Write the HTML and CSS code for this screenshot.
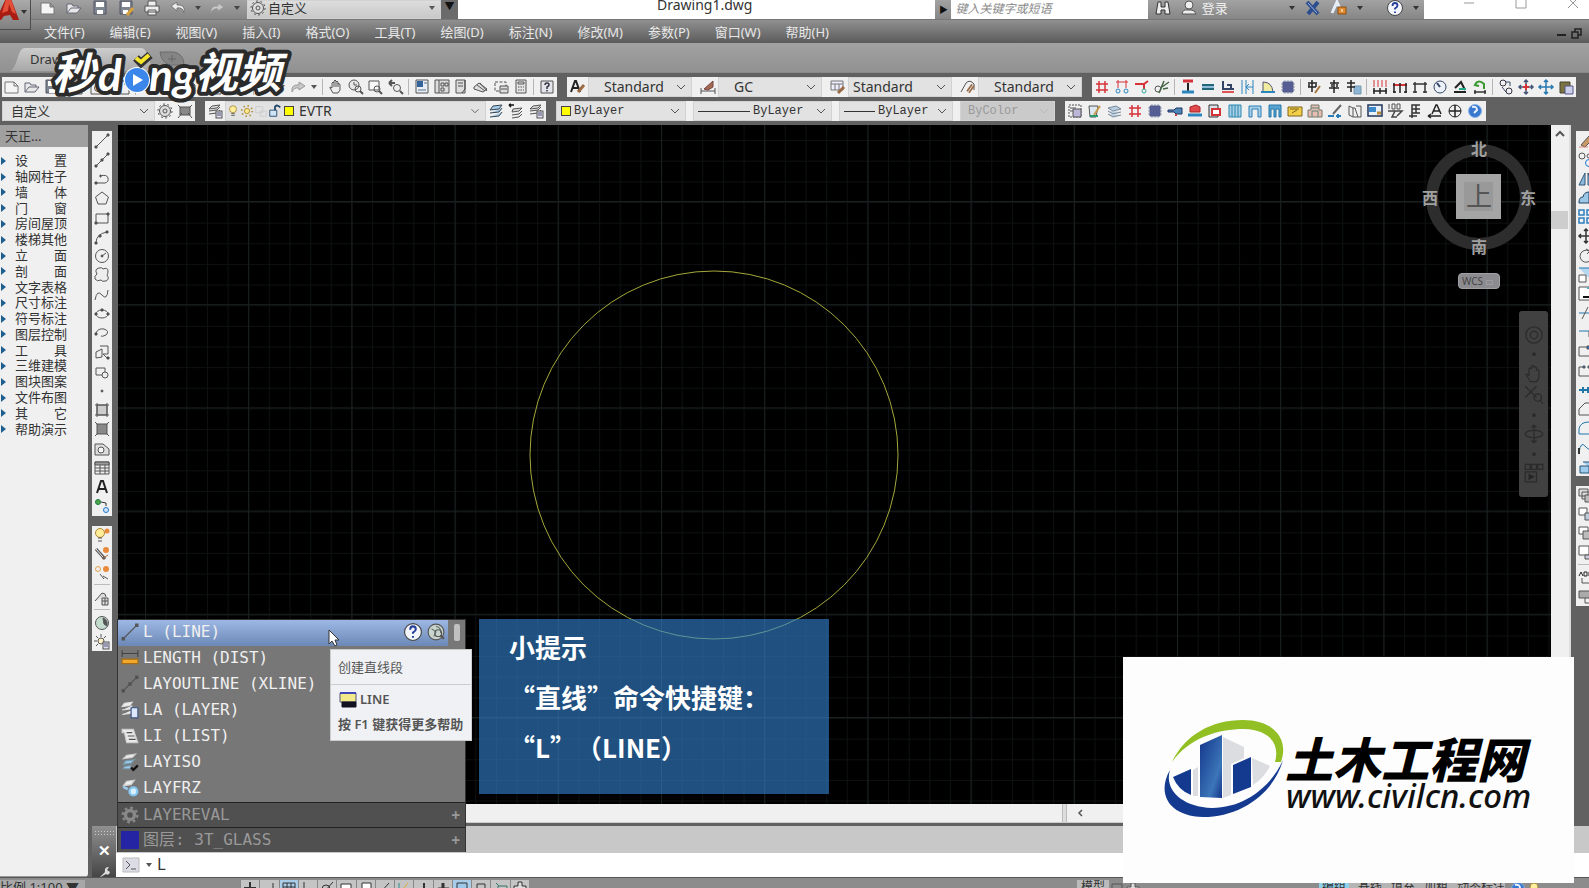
FILE: index.html
```html
<!doctype html>
<html lang="zh-CN">
<head>
    <meta charset="UTF-8">
    <meta content="width=device-width, initial-scale=1" name="viewport">
    <title>Drawing1.dwg</title>
    <link rel="stylesheet" href="styles.css">
</head>
<body>
<header class="titlebar">
    <button class="app-logo" aria-label="A">
        <svg viewBox="0 0 30 29"><path d="M-4 20 7-4h3l9 24h-6l-3-5-6 1-3 4z" fill="#a81c12"/><path d="M7-4 2 13l6-2 1-7 3 8 4 2L10-4z" fill="#e2503c"/><path d="M21 10h6l-3 4z" fill="#333"/></svg>
    </button>
    <div class="quick" data-icons="new open save saveas print undo caret redo caret"></div>
    <label class="field workspace-field"><i data-icon="gear"></i><select aria-label="工作空间"><option>自定义</option></select><i data-icon="caret"></i></label>
    <button class="quick-more">▼</button>
    <div class="doc-title">Drawing1.dwg</div>
    <button class="search-toggle">▶</button>
    <input class="search" type="text" placeholder="键入关键字或短语" aria-label="搜索">
    <div class="account">
        <i data-icon="binoculars"></i><i data-icon="user"></i>
        <button class="login">登录</button>
        <i data-icon="caret"></i><i data-icon="exchange"></i><i data-icon="lock"></i><i data-icon="caret"></i>
        <i class="help" data-icon="help"></i><i data-icon="caret"></i>
    </div>
    <div class="window-buttons" data-icons="min max close"></div>
</header>

<nav class="menubar">
    <a href="#">文件(F)</a>
    <a href="#">编辑(E)</a>
    <a href="#">视图(V)</a>
    <a href="#">插入(I)</a>
    <a href="#">格式(O)</a>
    <a href="#">工具(T)</a>
    <a href="#">绘图(D)</a>
    <a href="#">标注(N)</a>
    <a href="#">修改(M)</a>
    <a href="#">参数(P)</a>
    <a href="#">窗口(W)</a>
    <a href="#">帮助(H)</a>
    <div class="doc-buttons" data-icons="docmin restore"></div>
</nav>

<div class="file-tabs">
    <svg class="tab-shape" viewBox="0 0 190 30">
        <defs><linearGradient id="tab" x2="0" y2="1"><stop stop-color="#cdcdcd"/><stop offset="1" stop-color="#a8a8a8"/></linearGradient></defs>
        <path d="M10 28c8-3 7-23 15-23h116c8 0 8 20 15 23z" fill="url(#tab)"/>
        <path d="M160 9h14q10 2 10 13h-14q-9-3-10-13z" fill="#858585" stroke="#6c6c6c"/><path d="M172 12v7m-4-3h8" stroke="#666"/>
    </svg>
    <button class="file-tab">Drawing1*</button>
    <!-- video logo -->
    <svg class="video-logo" viewBox="0 0 250 60">
        <g class="video-text">
            <text x="4" y="39" font-size="43">秒</text>
            <text x="50" y="41" font-size="44" class="latin">d</text>
            <text x="101" y="41" font-size="44" class="latin">ng</text>
            <text x="147" y="38" font-size="43">视频</text>
        </g>
        <circle cx="89" cy="30" r="13" fill="#fff"/><circle cx="89" cy="30" r="12" fill="#3b86ea"/>
        <path d="m85 24 10 6-10 6z" fill="#fff"/>
        <path d="m88 8 5 5 9-8" fill="none" stroke="#333" stroke-width="8"/><path d="m88 8 5 4 8-7" fill="none" stroke="#f5e52a" stroke-width="4"/>
    </svg>
</div>

<div class="toolbars">
    <div class="bar-row">
        <div class="bar bar-standard" data-icons="new open save | print preview | publish | cut copy paste | match | block | undo caret redo caret | hand zoomtime zoomwin zoomprev | props design palette sheets markup calc | helpbox"></div>
        <div class="bar bar-styles">
            <i data-icon="textstyle"></i>
            <label class="field"><select aria-label="文字样式"><option>Standard</option></select><i data-icon="chev"></i></label>
            <i data-icon="dimstyle"></i>
            <label class="field"><select aria-label="标注样式"><option>GC</option></select><i data-icon="chev"></i></label>
            <i data-icon="tablestyle"></i>
            <label class="field tight"><select aria-label="表格样式"><option>Standard</option></select><i data-icon="chev"></i></label>
            <i data-icon="leaderstyle"></i>
            <label class="field"><select aria-label="引线样式"><option>Standard</option></select><i data-icon="chev"></i></label>
        </div>
        <div class="bar bar-axis" data-icons="hash axis2 axis3 axiscut | column wallh wallv walls door block2 | textedit text1 text2 | dims dimred dimb clock level refresh | group crossred crossblue clip"></div>
    </div>
    <div class="bar-row">
        <div class="bar bar-space">
            <label class="field tight small"><select aria-label="工作空间"><option>自定义</option></select><i data-icon="chev"></i></label>
            <i data-icon="gear"></i><i data-icon="gearbox"></i>
        </div>
        <div class="bar bar-layers">
            <i data-icon="layers"></i>
            <label class="field layer-field"><i data-icon="bulb"></i><i data-icon="sun"></i><i data-icon="freeze"></i><i data-icon="unlock"></i><b class="swatch"></b><select aria-label="图层"><option>EVTR</option></select><i data-icon="chev"></i></label>
            <i data-icon="layerblue"></i><i data-icon="layerprev"></i><i data-icon="layers"></i>
        </div>
        <div class="bar bar-props">
            <label class="field mono"><b class="swatch"></b><select aria-label="颜色"><option>ByLayer</option></select><i data-icon="chev"></i></label>
            <label class="field mono"><b class="line"></b><select aria-label="线型"><option>ByLayer</option></select><i data-icon="chev"></i></label>
            <label class="field mono"><b class="line short"></b><select aria-label="线宽"><option>ByLayer</option></select><i data-icon="chev"></i></label>
            <label class="field mono disabled"><select aria-label="打印样式" disabled><option>ByColor</option></select><i data-icon="chev"></i></label>
        </div>
        <div class="bar bar-wall" data-icons="listbox brushdoc stack hash block2 beam redbox redwin stripes arch arch2 yellowwin house pencil book bluewin hundred textf leadera target globe"></div>
    </div>
</div>

<main class="workspace">
    <aside class="palette">
        <h2>天正...</h2>
        <ul>
            <li><a href="#">设置</a></li>
            <li><a href="#">轴网柱子</a></li>
            <li><a href="#">墙体</a></li>
            <li><a href="#">门窗</a></li>
            <li><a href="#">房间屋顶</a></li>
            <li><a href="#">楼梯其他</a></li>
            <li><a href="#">立面</a></li>
            <li><a href="#">剖面</a></li>
            <li><a href="#">文字表格</a></li>
            <li><a href="#">尺寸标注</a></li>
            <li><a href="#">符号标注</a></li>
            <li><a href="#">图层控制</a></li>
            <li><a href="#">工具</a></li>
            <li><a href="#">三维建模</a></li>
            <li><a href="#">图块图案</a></li>
            <li><a href="#">文件布图</a></li>
            <li><a href="#">其它</a></li>
            <li><a href="#">帮助演示</a></li>
        </ul>
    </aside>

    <div class="stage">
        <div class="stage-top">
            <div class="side-tools">
                <div class="vbar draw-bar" data-icons="line xline pline polygon rect arc circle cloud spline ellipse earc insert mkblock point hatch gradient region table mtext addsel"></div>
                <div class="vbar layer-bar" data-icons="bulbo brusho doto | planegray | worldgreen sungray"></div>
            </div>
            <div class="view">
                <div class="view-row">
                    <div class="canvas">
                        <svg class="drawing">
                            <defs>
                                <pattern id="minor" width="20.64" height="20.64" x="27" y="77" patternUnits="userSpaceOnUse"><path d="M.5 0v20.64M0 .5h20.64" stroke="#0e1111"/></pattern>
                                <pattern id="major" width="103.2" height="103.2" x="27" y="76" patternUnits="userSpaceOnUse"><path d="M.5 0v103.2M0 .5h103.2" stroke="#1a2020"/></pattern>
                            </defs>
                            <rect width="100%" height="100%" fill="url(#minor)"/>
                            <rect width="100%" height="100%" fill="url(#major)"/>
                            <circle cx="596" cy="330" r="184" fill="none" stroke="#a5a83a"/>
                        </svg>
                        <svg class="compass" viewBox="0 0 120 120">
                            <circle cx="60" cy="60" r="47" fill="none" stroke="#2d2d2d" stroke-width="12"/>
                            <path d="M37 37h45v45H37z" fill="#a5a5a5"/><path d="M45 45h29v29H45z" fill="#999"/>
                            <text x="60" y="69" class="face">上</text>
                            <text x="60" y="18">北</text><text x="60" y="116">南</text>
                            <text x="11" y="67">西</text><text x="109" y="67">东</text>
                        </svg>
                        <button class="wcs">WCS <span></span></button>
                        <div class="navbar" data-icons="wheel dot navhand navzoom dot orbit dot motion"></div>
                        <section class="tip">
                            <p>小提示</p>
                            <p>“直线”命令快捷键：</p>
                            <p>“L”（LINE）</p>
                        </section>
                    </div>
                    <div class="vscroll"><i data-icon="up"></i><span></span></div>
                </div>
                <div class="hscroll"><span></span><i data-icon="left"></i></div>
            </div>
            <div class="side-tools right">
                <div class="vbar modify-bar" data-icons="erase mcopy mirror offset array move rotate scale stretch trim extend breakpt break join chamfer fillet blend explode"></div>
                <div class="vbar order-bar" data-icons="front back above under | abc hatchback"></div>
            </div>
        </div>

        <div class="command">
            <div class="grip"><span class="dots"></span><button aria-label="关闭">✕</button><i data-icon="wrench"></i></div>
            <div class="command-body">
                <div class="history"></div>
                <label class="prompt"><i data-icon="prompt"></i><i data-icon="caret"></i><input type="text" value="L" aria-label="命令"></label>
                <div class="suggest">
                    <ul>
                        <li class="active"><i data-icon="line"></i>L (LINE)<i class="right-icon" data-icon="help"></i><i data-icon="web"></i></li>
                        <li><i data-icon="dist"></i>LENGTH (DIST)</li>
                        <li><i data-icon="xline"></i>LAYOUTLINE (XLINE)</li>
                        <li><i data-icon="layerw"></i>LA (LAYER)</li>
                        <li><i data-icon="listw"></i>LI (LIST)</li>
                        <li><i data-icon="layiso"></i>LAYISO</li>
                        <li><i data-icon="layfrz"></i>LAYFRZ</li>
                        <li class="more"><i data-icon="cog"></i>LAYEREVAL<span>+</span></li>
                        <li class="more"><b></b>图层: 3T_GLASS<span>+</span></li>
                    </ul>
                    <span class="suggest-thumb"></span>
                    <div class="tooltip">
                        <p>创建直线段</p>
                        <div><strong><i data-icon="cmdline"></i>LINE</strong><strong>按 F1 键获得更多帮助</strong></div>
                    </div>
                    <svg class="cursor" viewBox="0 0 12 18"><path d="M1 1v14l3-3 3 5 2-1-2-5h4z" fill="#fff" stroke="#333"/></svg>
                </div>
            </div>
        </div>
    </div>
</main>

<footer class="status">
    <span class="scale">比例 1:100 ▼</span>
    <div class="modes" data-icons="snapx grids gridb ortho polar osnap box3 otrack ducs dyn lwt tpy qp sc plusb"></div>
    <span class="model">模型</span>
    <div class="status-icons" data-icons="max plusb"></div>
    <div class="toggles"><b>编组</b><span>基线</span><span>填充</span><span>加粗</span><span>动态标注</span></div>
    <div class="status-icons" data-icons="globe bulb"></div>
</footer>

<div class="brand">
    <svg viewBox="0 0 451 226">
        <defs><linearGradient id="tower" x2="1" y2="1"><stop stop-color="#12348a"/><stop offset=".7" stop-color="#3c76b8"/><stop offset="1" stop-color="#12348a"/></linearGradient></defs>
        <path d="M49 105C62 78 88 63 120 63c32 0 46 20 38 42l-6 0c5-18-5-32-31-33-26 0-55 9-72 33z" fill="#92c024"/>
        <path d="M47 113c-13 22-3 46 33 47 38 0 71-24 80-57-11 25-37 48-71 48-31-1-48-19-42-38z" fill="#143a90"/>
        <path d="m100 80 21 10v11l-13 6v31l-8 3zM129 101l18 8q-6 12-17 19zM70 113l5-3v29h-5z" fill="#dcdde0"/>
        <path d="m50 120 18-8v26q-13-5-18-18zM110 108l18-8v30l-18 7z" fill="#143a90"/>
        <path d="m77 88 22-10v63l-22-1z" fill="url(#tower)"/>
        <text x="162" y="121" class="brand-name">土木工程网</text>
        <text x="163" y="151" class="brand-url">www.civilcn.com</text>
    </svg>
</div>
<script src="icons.js"></script>
</body>
</html>
```
FILE: styles.css
```css
* {
    box-sizing: border-box;
}

body {
    margin: 0;
    height: 100vh;
    overflow: hidden;
    position: relative;
    display: flex;
    flex-direction: column;
    background: #616161;
    font: 13px "Noto Sans", "Noto Sans CJK SC", sans-serif;
    color: #333;
}

button, input, select {
    font: inherit;
    color: inherit;
    border: none;
    background: none;
    padding: 0;
    margin: 0;
    min-width: 0;
}

select {
    appearance: none;
    flex: 1;
    opacity: 1;
    line-height: 18px;
}

ul, p, h2 {
    margin: 0;
    padding: 0;
    list-style: none;
}

a {
    color: inherit;
    text-decoration: none;
}

i, .tool {
    display: flex;
    align-items: center;
    justify-content: center;
    flex: 0 1 20px;
    height: 18px;
    color: #555;
}

i svg, .tool svg {
    width: 16px;
    height: 16px;
    flex: none;
    fill: none;
    stroke: currentColor;
    overflow: visible;
}

.tool[aria-label="caret"], i[data-icon="caret"] {
    flex: 0 1 12px;
}

.sep {
    flex: 0 0 6px;
    border-left: 1px solid #b5b5b5;
    transform: translateX(2px);
    height: 16px;
}

.field {
    display: flex;
    align-items: center;
    background: #e2e2e2;
    border: 1px solid #d2d2d2;
    height: 20px;
}

/* title bar */
.titlebar {
    height: 20px;
    flex: none;
    display: flex;
    background: linear-gradient(#a2a2a2, #868686);
    padding-left: 34px;
    border-bottom: 1px solid #777;
}

.app-logo {
    position: absolute;
    left: 0;
    top: 0;
    z-index: 2;
    width: 31px;
    height: 30px;
    background: linear-gradient(#aaa, #808080);
    border: solid #4d4d4d;
    border-width: 0 1px 1px 0;
}

.quick {
    width: 213px;
    display: flex;
    height: 15px;
    padding-left: 1px;
}

.quick .tool {
    flex: 0 0 26px;
    height: 15px;
    color: #eee;
}

.quick .tool[aria-label="caret"] {
    flex-basis: 13px;
    color: #444;
}

.workspace-field {
    width: 194px;
    height: 19px;
    padding-bottom: 3px;
    background: linear-gradient(#ddd, #c8c8c8);
}

.quick-more {
    width: 17px;
    font-size: 10px;
    background: #6b6b6b;
    color: #111;
    line-height: 13px;
    padding-bottom: 6px;
}

.doc-title {
    flex: 475;
    background: #fff;
    text-align: center;
    font-size: 14px;
    line-height: 10px;
    padding-left: 16px;
}

.search-toggle {
    width: 16px;
    font-size: 9px;
    color: #111;
    line-height: 14px;
}

.search {
    flex: 194;
    background: #fff;
    padding: 0 4px 3px;
    font-style: italic;
    font-size: 12px;
}

.search::placeholder {
    color: #888;
}

.account {
    width: 276px;
    display: flex;
    height: 15px;
    padding-left: 2px;
}

.account i {
    height: 15px;
    flex: 0 0 26px;
    color: #333;
}

.account i[data-icon="caret"] {
    flex-basis: 10px;
}

.account .help {
    margin-left: 14px;
}

.login {
    color: #f0f0f0;
    width: 89px;
    text-align: left;
    line-height: 14px;
}

.window-buttons {
    flex: 170;
    background: #fff;
    display: flex;
    justify-content: flex-end;
    overflow: hidden;
}

.window-buttons .tool {
    flex: 0 0 52px;
    height: 6px;
    color: #999;
}

.window-buttons .tool:last-child {
    margin-right: -10px;
}

/* menu bar and file tabs */
.menubar {
    height: 23px;
    flex: none;
    display: flex;
    gap: 25px;
    padding-left: 44px;
    background: linear-gradient(#909090, #5b5b5b);
    color: #e8e8e8;
    line-height: 24px;
}

.doc-buttons {
    display: flex;
    margin-left: auto;
    padding-right: 4px;
}

.doc-buttons .tool {
    flex: 0 0 16px;
    height: 26px;
    color: #222;
}

.file-tabs {
    height: 30px;
    flex: none;
    position: relative;
    background: linear-gradient(#a2a2a2, #919191);
    border-bottom: 1px solid #888;
}

.tab-shape {
    position: absolute;
    left: 0;
    top: 0;
    width: 190px;
    height: 30px;
}

.file-tab {
    position: relative;
    margin-left: 30px;
    line-height: 33px;
}

.video-logo {
    position: absolute;
    left: 48px;
    top: 7px;
    width: 250px;
    height: 60px;
    z-index: 3;
    overflow: visible;
}

.video-text {
    font-family: "Noto Sans CJK SC", sans-serif;
    font-weight: 700;
    font-style: italic;
    fill: #fff;
    stroke: #2b2b2b;
    stroke-width: 8px;
    stroke-linejoin: round;
    paint-order: stroke;
}

.video-text .latin {
    font-family: Lato, sans-serif;
}

/* toolbars */
.toolbars {
    flex: none;
    display: grid;
    gap: 4px;
    padding: 4px 2px;
}

.bar-row {
    display: flex;
    gap: 10px;
}

.bar {
    display: flex;
    align-items: center;
    flex: none;
    height: 20px;
    background: #f0f0f0;
}

.bar .field {
    font-size: 14px;
    padding-left: 15px;
}

.bar .tight {
    padding-left: 4px;
}

.bar .small {
    font-size: 13px;
    padding-left: 8px;
}

.bar .mono {
    font: 12px "Liberation Mono", monospace;
    padding-left: 4px;
    gap: 3px;
}

.bar .disabled {
    background: #cacaca;
    color: #999;
    padding-left: 7px;
}

.disabled i {
    color: #bbb;
}

.swatch {
    width: 10px;
    height: 10px;
    background: #ff0;
    border: 1px solid #444;
}

.line {
    width: 52px;
    border-top: 1px solid #333;
}

.line.short {
    width: 31px;
}

.bar-standard {
    width: 555px;
}

.bar-styles {
    width: 515px;
}

.bar-styles .field {
    flex: 0 0 104px;
    margin-right: 5px;
}

.bar-styles .field:last-child {
    margin-right: 0;
}

.bar-styles > i {
    flex: 0 0 21px;
}

.bar-axis {
    width: 484px;
}

.bar-axis .tool {
    flex: 0 0 20px;
}

.bar-space {
    width: 193px;
}

.bar-space .field {
    flex: 1;
}

.bar-layers {
    width: 341px;
}

.bar-layers .field {
    flex: 1;
    padding-left: 0;
}

.layer-field i {
    flex: 0 0 14px;
}

.layer-field i svg {
    width: 14px;
}

.layer-field .swatch {
    margin: 0 5px 0 2px;
}

.bar .field i[data-icon="chev"] {
    flex: 0 0 20px;
}

.bar-props {
    width: 499px;
    gap: 7px;
}

.bar-props .field {
    flex: 0 0 130px;
}

.bar-props .field:nth-child(2) {
    flex-basis: 139px;
}

.bar-props .field:nth-child(3) {
    flex-basis: 107px;
}

.bar-props .field:nth-child(4) {
    flex: 1;
}

.bar-wall {
    width: 421px;
}

/* workspace */
.workspace {
    flex: 1;
    min-height: 0;
    display: flex;
}

.palette {
    width: 88px;
    flex: none;
    background: #f0f0f0;
    border-bottom: 1px solid #999;
    border-radius: 0 3px 3px 0;
}

.palette h2 {
    font-size: 13px;
    font-weight: 400;
    line-height: 22px;
    background: #a0a0a0;
    padding-left: 5px;
}

.palette ul {
    margin-top: 6px;
    display: grid;
    grid-auto-rows: 1fr;
    height: 284px;
}

.palette li {
    display: flex;
    align-items: center;
    line-height: 15px;
}

.palette li::before {
    content: '';
    border: solid transparent;
    border-width: 4px 0 4px 5px;
    border-left-color: #1f5f8f;
    margin: 0 9px 0 1px;
}

.palette a {
    width: 52px;
    text-align-last: justify;
}

.stage {
    flex: 1;
    min-width: 0;
    display: flex;
    flex-direction: column;
    padding-left: 4px;
}

.stage-top {
    flex: 1;
    min-height: 0;
    display: flex;
}

.side-tools {
    width: 20px;
    flex: none;
    padding-top: 6px;
}

.side-tools.right {
    width: 13px;
    overflow: hidden;
}

.vbar {
    display: flex;
    flex-direction: column;
    width: 20px;
    background: #f0f0f0;
    margin-bottom: 10px;
}

.vbar .tool {
    flex: 1;
    width: 20px;
    min-height: 0;
}

.vbar .sep {
    border-left: none;
    border-top: 1px solid #bbb;
    transform: translateY(2px);
    width: 16px;
    margin-left: 2px;
}

.draw-bar {
    height: 385px;
}

.layer-bar {
    height: 125px;
}

.modify-bar {
    height: 345px;
}

.order-bar {
    height: 120px;
}

.view {
    flex: 1;
    min-width: 0;
    display: flex;
    flex-direction: column;
    margin: 0 5px 3px 6px;
}

.view-row {
    flex: 1;
    min-height: 0;
    display: flex;
}

.canvas {
    flex: 1;
    position: relative;
    background: #000;
    overflow: hidden;
}

.drawing {
    display: block;
    width: 100%;
    height: 100%;
}

.compass {
    position: absolute;
    right: 12px;
    top: 12px;
    width: 120px;
    height: 120px;
    fill: #a0a0a0;
    font-size: 16px;
    font-weight: 700;
    text-anchor: middle;
    overflow: visible;
}

.compass .face {
    font-size: 26px;
    font-weight: 400;
    fill: #555;
}

.wcs {
    position: absolute;
    right: 51px;
    top: 148px;
    width: 42px;
    height: 16px;
    border-radius: 4px;
    background: #8c8c90;
    border: 1px solid #a0a0a4;
    color: #444;
    font-size: 10px;
    line-height: 12px;
    text-align: left;
    padding-left: 3px;
}

.wcs span {
    display: inline-block;
    width: 7px;
    height: 5px;
    border: 1px solid #9c9ca0;
}

.navbar {
    position: absolute;
    right: 3px;
    top: 186px;
    width: 29px;
    height: 186px;
    border-radius: 3px;
    background: #414141;
    display: flex;
    flex-direction: column;
    align-items: center;
    padding: 13px 0;
}

.navbar .tool {
    flex: 26;
    color: #2b2b2b;
}

.navbar .tool[aria-label="dot"] {
    flex: 10;
}

.navbar svg {
    width: 20px;
    height: 20px;
}

.tip {
    position: absolute;
    left: 361px;
    top: 494px;
    width: 350px;
    height: 175px;
    padding: 3px 0 0 30px;
    background: rgba(51, 133, 212, .6);
    color: #fff;
    font: 700 26px/50px "Noto Sans CJK SC", sans-serif;
    text-spacing-trim: space-all;
    white-space: nowrap;
}

.vscroll {
    width: 20px;
    background: #f0f0f0;
    border-right: 2px solid #ddd;
}

.vscroll span {
    display: block;
    width: 17px;
    height: 18px;
    margin-top: 68px;
    background: #cdcdcd;
}

.hscroll {
    height: 19px;
    flex: none;
    display: flex;
    background: #f0f0f0;
    border-bottom: 1px solid #ccc;
}

.hscroll span {
    margin-left: 65%;
    width: 5px;
    border: solid #bbb;
    border-width: 0 1px;
    background: #ddd;
    margin-right: 3px;
}

/* command line */
.command {
    flex: none;
    display: flex;
    height: 51px;
}

.grip {
    width: 24px;
    display: flex;
    flex-direction: column;
    align-items: center;
    overflow: hidden;
    background: linear-gradient(#909090, #454545);
}

.grip .dots {
    width: 20px;
    height: 7px;
    flex: none;
    margin-top: 4px;
    background: radial-gradient(#ccc 1px, transparent 1px) 0 0 / 3px 3px;
}

.grip button {
    color: #fff;
    font-size: 15px;
    font-weight: 700;
    line-height: 26px;
}

.grip i {
    flex: none;
    color: #ddd;
}

.command-body {
    flex: 1;
    position: relative;
}

.history {
    height: 27px;
    background: #c8c8c8;
}

.prompt {
    display: flex;
    align-items: center;
    height: 24px;
    padding-left: 5px;
    background: #fff;
    font: 15px "DejaVu Sans Mono", monospace;
}

.prompt i[data-icon="caret"] {
    flex-basis: 10px;
}

.prompt input {
    flex: 1;
    outline: none;
}

.suggest {
    position: absolute;
    left: 1px;
    bottom: 25px;
    width: 349px;
    border: 1px solid #333;
    border-bottom: none;
    background: #777;
    font: 16px/24px "DejaVu Sans Mono", "Noto Sans CJK SC", monospace;
    color: #f0f0f0;
}

.suggest li {
    display: flex;
    align-items: center;
    height: 26px;
    padding: 0 0 2px 2px;
    gap: 3px;
}

.suggest li i {
    flex: 0 0 20px;
}

.suggest li svg {
    width: 18px;
    height: 18px;
}

.suggest .active {
    width: 330px;
    background: linear-gradient(#9db8e4, #6c88b6);
    padding-right: 2px;
}

.suggest .right-icon {
    margin-left: auto;
}

.suggest .more {
    height: 25px;
    background: #505050;
    border-top: 1px solid #222;
    color: #999;
    padding-bottom: 0;
}

.more b {
    width: 18px;
    height: 18px;
    margin: 0 1px;
    background: #2424a4;
}

.more span {
    margin-left: auto;
    margin-right: 5px;
    font-size: 14px;
    font-weight: 700;
}

.suggest-thumb {
    position: absolute;
    right: 5px;
    top: 4px;
    width: 6px;
    height: 17px;
    background: #c0c0c0;
    border-radius: 2px;
}

.tooltip {
    position: absolute;
    left: 212px;
    top: 29px;
    width: 142px;
    height: 92px;
    background: #f0f1f4;
    border: 1px solid #ccc;
    font: 13px "Noto Sans", "Noto Sans CJK SC", sans-serif;
    color: #555;
    white-space: nowrap;
}

.tooltip p {
    padding-left: 7px;
    line-height: 34px;
    border-bottom: 1px solid #ccc;
}

.tooltip div {
    padding: 2px 0 0 7px;
}

.tooltip strong {
    display: flex;
    align-items: center;
    gap: 2px;
    line-height: 25px;
    font-weight: 600;
}

.tooltip strong i {
    flex: 0 0 20px;
}

.cursor {
    position: absolute;
    left: 210px;
    top: 9px;
    width: 12px;
    height: 18px;
}

/* status bar */
.status {
    flex: none;
    height: 11px;
    display: flex;
    overflow: hidden;
    background: #8c8c8c;
    border-top: 1px solid #555;
    line-height: 14px;
    font-size: 12px;
    padding-top: 2px;
}

.scale {
    width: 240px;
    background: linear-gradient(90deg, #a8a8a8 85px, transparent 85px);
    font-size: 13px;
    white-space: nowrap;
}

.modes {
    display: flex;
    height: 16px;
    width: 289px;
}

.modes .tool {
    flex: 1;
    background: #c4c4c4;
    border-left: 1px solid #888;
    color: #333;
    height: 16px;
}

.modes .tool:nth-child(3), .modes .tool:nth-child(12) {
    background: #a9cde8;
}

.model {
    margin-left: auto;
    background: #bbb;
    padding: 0 4px;
}

.status-icons {
    display: flex;
}

.toggles {
    display: flex;
    gap: 9px;
    margin-left: 178px;
    background: #b4b4b4;
}

.toggles b {
    background: #8fd0ea;
    font-weight: 400;
    padding: 0 3px;
}

.status-icons:last-child {
    margin: 0 47px 0 5px;
}

/* site mark in the corner */
.brand {
    position: absolute;
    right: 15px;
    bottom: 5px;
    width: 451px;
    height: 226px;
    background: #fdfdfd;
}

.brand-name {
    font: italic 900 48px "Noto Sans CJK SC", sans-serif;
}

.brand-url {
    font: italic 500 33px "Noto Sans", sans-serif;
    fill: #111;
}
```
FILE: icons.js
```js
// all icons are drawn on a 16x16 grid
const red = 'stroke="#d5333a"';
const blue = 'stroke="#2b86c0"';
const page = '<path d="M2 2h8l4 4v9H2zM10 2v4h4"/>';
const mag = '<circle cx="9" cy="9" r="3.5"/><path d="m12 12 3 3" stroke-width="2"/>';
const sheets = '<path d="m5 3 8-1-3 3-8 1zM2 8l8-1 3-3M2 11l8-1 3-3" fill="#ddd"/>';
const doc2 = '<rect x="9" y="8" width="6" height="7" fill="#dde"/><path d="M10 10h4M10 12h4" stroke="#557"/>';

const icons = {
  new: '<path d="M1 3h9l4 4v7H1zM10 3v4h4" fill="#f5f5f5" stroke="#777"/>',
  open: '<path d="M1 13V4h5l1 2h5v2M1 13l4-5h10l-4 5z" fill="#e8e8e8" stroke="#667"/>',
  save: '<path d="M2 1h12v13H2z" fill="#7d8590" stroke="#556"/><path d="M4 2h8v5H4zM5 10h6v4H5z" fill="#fff" stroke="none"/>',
  saveas: '<path d="M2 1h12v13H2z" fill="#7d8590" stroke="#556"/><path d="M4 2h8v5H4zM5 10h5v4H5z" fill="#fff" stroke="none"/><path d="m9 15 6-7" stroke="#d9a13a" stroke-width="3"/>',
  print: '<path d="M4 6V1h8v5M1 6h14v6H1zM4 10h8v5H4z" fill="#eee" stroke="#555"/>',
  undo: '<path d="M7 2 1 6l6 5V8q6-1 7 5 2-9-7-8z" fill="#ececec" stroke="#777"/>',
  redo: '<path d="m9 3 6 4-6 4V9q-5-1-7 4Q1 5 9 6z" fill="#c8c8c8" stroke="#999"/>',
  caret: '<path d="M5 6h6l-3 4z" fill="currentColor" stroke="none"/>',
  chev: '<path d="m4 6 4 4 4-4"/>',
  gear: '<circle cx="8" cy="8" r="5.5" fill="#ddd"/><circle cx="8" cy="8" r="2"/><circle cx="8" cy="8" r="7" stroke-dasharray="2 2.4"/>',
  gearbox: '<path d="M3 4h10v8H3z" fill="#888"/><path d="m1 15 4-5M1 2l3 3M15 2l-3 3M15 15l-4-5"/>',
  binoculars: '<path d="M3 2h3v5h4V2h3l2 12h-5v-4H6v4H1z" fill="#eee" stroke="#333"/>',
  user: '<circle cx="8" cy="5" r="4" fill="#eee" stroke="#555"/><path d="M1 14q1-5 5-4h4q4 0 5 4z" fill="#eee" stroke="#555"/>',
  exchange: '<path d="m2 2 11 12M13 2 3 14" stroke="#2c4d8e" stroke-width="4"/><path d="m3 3 9 10" stroke="#9fb6dc"/>',
  lock: '<path d="m1 13 5-11 4 9" stroke="#e6edf8" stroke-width="3"/><path d="M7 7h8v7H7z" fill="#e08a2e" stroke="#8a4d10"/><path d="M11 9v3" stroke="#fff"/>',
  help: '<circle cx="8" cy="8" r="7.5" fill="#f2f5fb" stroke="#444"/><path d="M5.500 6q0-3 2.500-3t2.500 2.500q0 1.500-2.500 3v1M8 11.500v1.500" stroke="#27409a" stroke-width="1.800"/>',
  min: '<path d="M3 8h10"/>',
  max: '<path d="M3 3h10v10H3z"/>',
  close: '<path d="m3 3 10 10M13 3 3 13"/>',
  docmin: '<path d="M4 10h9" stroke-width="2"/>',
  restore: '<path d="M3 7h6v6H3zM6 7V4h6v6H9" stroke-width="1.500"/>',
  preview: page + mag, publish: page, cut: '<path d="m3 2 8 10M12 2 4 12"/>', copy: page, paste: page, match: page, block: page,
  hand: '<path d="M5 14 2 9q-1-2 2 0V4q1-2 2 0V2q1-2 2 0v1q1-2 2 0v2q2-1 2 1v5l-2 3z" fill="#eee"/><path d="M6 4v4M8 3v5M10 4v4"/>',
  zoomtime: '<circle cx="6" cy="6" r="5" fill="#e8e8e8"/><path d="M6 3v3h3"/><circle cx="10" cy="10" r="3"/><path d="m12 12 3 3" stroke-width="2"/>',
  zoomwin: '<path d="M1 2h10v9H1z" fill="#f8f8f8"/><circle cx="9" cy="10" r="3"/><path d="m11 12 3 3" stroke-width="2"/>',
  zoomprev: '<path d="M1 4h6M1 4l3-3M1 4l3 3" stroke-width="2"/>' + mag,
  props: '<path d="M2 1h12v13H2z" fill="#e8eef4"/><path d="M3 2h6v6H3z" fill="#33639d" stroke="none"/><path d="M10 4h3M4 11h8" stroke="#57708a"/>',
  design: '<path d="M1 1h14v13H1zM5 1v13M7 4h3v3H7zM11 4h3v3h-3zM7 9h3v3H7z" fill="#ddd"/>',
  palette: '<path d="M3 1h9v13H3zM5 4h5M5 7h5" fill="#ddd"/><path d="M12 1v9l-3 4" stroke="#444"/>',
  sheets: '<path d="m1 8 5-4 8 6-4 3-9-3z" fill="#ddd"/><path d="m4 6 8 6M7 4l7 8"/>',
  markup: '<path d="M2 3h11v9H2z" stroke-dasharray="3 1.500"/><path d="M7 7h8v7H7z" fill="#ddd"/><path d="M8 10h6"/>',
  calc: '<path d="M3 1h10v13H3zM5 3h6v2H5z" fill="#e6e6e6"/><path d="M5 8h6M5 11h6" stroke-dasharray="1.500 1"/>',
  helpbox: '<path d="M2 2h12v12H2z" fill="#e5e5ec"/><path d="M6 6q0-2 2-2t2 2q0 1-2 2v2M8 11v1.500" stroke="#334" stroke-width="1.500"/>',
  textstyle: '<path d="M1 13 5 2h1l4 11M3 9h6" stroke="#222" stroke-width="2"/><path d="m8 13 6-7" stroke="#9a6a44" stroke-width="3"/>',
  dimstyle: '<path d="M1 12h14M1 9v6M15 9v6" stroke="#555"/><path d="m4 10 9-8v6l-5 3z" fill="#a56a52" stroke="#744"/>',
  tablestyle: '<path d="M1 2h12v9H1zM1 5h12M5 5v6M9 5v6" fill="#eef" stroke="#777"/><path d="m8 14 6-6" stroke="#9a6a44" stroke-width="3"/>',
  leaderstyle: '<path d="m1 13 5-9q4-4 8 1v6"/><path d="m8 13 5-7" stroke="#9a6a44" stroke-width="4"/><path d="m8 13 5-7" stroke="#ddd"/>',
  hash: `<path d="M5 2v12M11 2v12M2 5h12M2 11h12" ${red} stroke-width="1.500"/>`,
  axis2: `<path d="M2 3h12M4 1v8M12 1v8" ${red}/><circle cx="4" cy="12" r="2" ${blue}/><circle cx="12" cy="12" r="2" ${blue}/>`,
  axis3: `<path d="M1 5h9l4-3M10 5v5" ${red} stroke-width="2"/><circle cx="10" cy="12" r="2" stroke="#3a9"/>`,
  axiscut: '<circle cx="4" cy="10" r="3"/><path d="m5 14 5-12M8 8l7-5M9 10l5-1" stroke="#464" stroke-width="1.500"/>',
  column: `<path d="M3 2h10" ${red} stroke-width="3"/><path d="M8 4v8" stroke="#222" stroke-width="2"/><path d="M2 13h12" ${blue} stroke-width="3"/>`,
  wallh: `<path d="M2 6h12M2 10h12" stroke="#267" stroke-width="2"/><path d="M2 8h12" ${blue}/>`,
  wallv: '<path d="M3 2v8h11M7 6h4v4" stroke="#346" stroke-width="2"/><path d="M2 13h12" stroke="#d55" stroke-width="2"/>',
  walls: `<path d="M2 1v14M6 1v14M13 1v14M6 8h7M9 5 6 8l3 3" ${blue}/>`,
  door: '<path d="M3 13V3q9 0 10 10z" fill="#f0eca0" stroke="#557"/><path d="M1 13h14" stroke="#2b86c0" stroke-width="2"/>',
  block2: '<path d="M3 3h10v10H3z" fill="#4d5a9c" stroke="#4d5a8c"/><path d="M5 1v14M8 1v14M11 1v14M1 5h14M1 8h14M1 11h14" stroke="#668" stroke-width=".6"/>',
  textedit: '<path d="M2 4h9M6 1v12M2 8h8M3 5v3M10 5v3" stroke="#222" stroke-width="1.500"/><path d="m9 14 5-7" stroke="#a87840" stroke-width="2"/>',
  text1: '<path d="M4 4h9M8 1v13M3 9h10M6 5v3M11 5v3" stroke="#222" stroke-width="1.500"/>',
  text2: '<path d="M8 7h7v8H8z" fill="#8db6d8" stroke="#79a"/><path d="M1 4h8M5 1v12M1 8h8" stroke="#222" stroke-width="1.500"/>',
  dims: `<path d="M2 1v7M6 1v7M10 1v7M14 1v7" ${red}/><path d="M1 12h14M2 9v6M8 9v6M14 9v6" stroke="#222" stroke-width="1.500"/>`,
  dimred: `<path d="M1 6h14" ${red} stroke-width="2"/><path d="M2 4v10M8 4v10M14 4v10M1 13h3M12 13h3" stroke="#222" stroke-width="1.500"/>`,
  dimb: '<path d="M1 5h14M3 3v11M13 3v11M1 13h4M11 13h4" stroke="#333" stroke-width="1.500"/>',
  clock: '<circle cx="8" cy="8" r="6" fill="#edf2f8" stroke="#346"/><path d="M8 8 5 4" stroke="#346" stroke-width="2"/>',
  level: '<path d="m3 9 6-6 4 8M2 13h12" stroke="#222" stroke-width="2"/><path d="M7 10h7" stroke="#2a8" stroke-width="2"/>',
  refresh: '<path d="M3 5q4-5 9 0v5M5 3 3 6l4 1" stroke="#3a9a30" stroke-width="2"/><path d="M2 13h12M3 11v4M13 11v4" stroke="#333" stroke-width="1.500"/>',
  group: '<circle cx="5" cy="4" r="3" stroke="#334"/><circle cx="11" cy="12" r="3" stroke="#334"/><path d="M8 3h4v4M4 8l4 5" stroke="#346"/>',
  crossred: `<path d="M8 1v14M1 8h14M6 3l2-2 2 2M6 13l2 2 2-2M3 6 1 8l2 2M13 6l2 2-2 2" stroke="#457" stroke-width="1.500"/><path d="M8 5v6M5 8h6" ${red} stroke-width="2"/>`,
  crossblue: '<path d="M8 1v14M1 8h14M6 3l2-2 2 2M6 13l2 2 2-2M3 6 1 8l2 2M13 6l2 2-2 2" stroke="#277ab0" stroke-width="1.500"/>',
  clip: '<path d="M2 3h10v11H2z" fill="#7a7240" stroke="#443"/><path d="M7 7h8v8H7z" fill="#cdd0ea" stroke="#558"/>',
  layers: sheets + doc2,
  bulb: '<circle cx="8" cy="6" r="4" fill="#ffef9a" stroke="#a98a3a"/><path d="M6 11h4M6 13h4" stroke="#555"/>',
  sun: '<circle cx="8" cy="8" r="3" fill="#ffe98a" stroke="#b08a30"/><circle cx="8" cy="8" r="6" stroke="#b08a30" stroke-dasharray="1.500 3.200" stroke-width="2"/>',
  freeze: '<path d="M2 3h8v7H2zM7 8h7v6H7z" stroke="#ccc"/>',
  unlock: '<path d="M2 7h8v7H2z" fill="#cfe4f5" stroke="#246"/><path d="M8 7V3q3-3 6 1" stroke="#246" stroke-width="2"/>',
  layerblue: '<path d="m5 3 9-1-3 4-9 1zM2 10l9-1 3-4M2 14l9-1 3-4" fill="#a9cbe6" stroke="#345"/>',
  layerprev: '<path d="m5 6 9-1-3 3-7 1zM4 12l7-1 3-3M4 15l7-1 3-3" fill="#ddd"/><path d="M1 2h5M1 2l2-1M1 2l2 2" stroke="#111" stroke-width="1.500"/>',
  listbox: '<path d="M2 2h12v12H2z" stroke-dasharray="2 1"/><path d="M6 6h8v8H6z" fill="#bcb7d8"/><path d="M3 5h6M3 8h3"/>',
  brushdoc: '<path d="M2 3h9l-2 11H3z" fill="#dde8f0"/><path d="m7 12 6-9" stroke="#c79a4a" stroke-width="2"/><path d="M3 13h8" stroke="#2a9a70" stroke-width="2"/>',
  stack: '<path d="m1 5 8-2 5 3-8 2zM1 8l5 3 8-2M1 11l5 3 8-2" fill="#b9d0e3" stroke="#789"/>',
  beam: '<path d="M1 7h6l2-2h6v6H9L7 9H1z" fill="#4b86b4" stroke="#236"/><path d="M9 11v2" stroke="#c44" stroke-width="2"/>',
  redbox: '<path d="M3 8V4l6-2 4 2v5H3z" fill="#e04a4e" stroke="#a22"/><path d="M1 12h14" stroke="#2b86c0" stroke-width="3"/>',
  redwin: '<path d="M2 2h9v12H2z" fill="#d8e0e8" stroke="#333"/><path d="M5 6h8v6H5z" fill="#fff" stroke="#d5333a" stroke-width="2"/>',
  stripes: '<path d="M2 2h12v12H2z" fill="#a8cfe4" stroke="none"/><path d="M2 2v12M5 2v12M8 2v12M11 2v12M14 2v12M2 2h12M2 14h12" stroke="#2b86b0"/>',
  arch: '<path d="M2 14V3h12v11h-3V6H5v8z" fill="#a8cfe4" stroke="#2b7fb8"/>',
  arch2: '<path d="M2 14V2h12v12h-2V6H9v8H7V6H4v8z" fill="#58a5d2" stroke="#2477a8"/>',
  yellowwin: '<path d="M1 4h14v9H1z" fill="#f3cf48" stroke="#7c6420"/><path d="M3 6h9M5 10l5-3" stroke="#7c6420"/>',
  house: '<path d="M4 2h8v5h3v7H1V7h3z" fill="#e8bcb2" stroke="#776"/><path d="M5 14V8h6v6M4 5h8" stroke="#587"/>',
  pencil: '<path d="m6 11 8-9" stroke="#666" stroke-width="2"/><path d="M1 13h6M11 11v4M14 13h-5" stroke="#2b7fb8" stroke-width="2"/>',
  book: '<path d="m2 3 4 2v9l-4-2zM6 5h2l3 9H6M9 3h5v11h-3"/>',
  bluewin: '<path d="M1 2h14v11H1z" fill="#e8f0fa" stroke="#235" stroke-width="1.500"/><path d="M2 4h7v5H2z" fill="#3c8acb" stroke="none"/><path d="M10 10h4" stroke="#b83" stroke-width="3"/>',
  hundred: '<path d="M2 1v5M5 1h3v5H5zM10 1h3v5h-3z"/><path d="M1 8h14l-5 5M8 8l-3 6h5" stroke="#444" stroke-width="1.500"/>',
  textf: '<path d="M5 15V2h8M5 6h8M5 10h8M2 13h8M9 2v8" stroke="#333" stroke-width="1.500"/>',
  leadera: '<path d="m5 11 4-9h1l4 9M7 8h6M1 13h13M1 13l3-2M1 13l3 2" stroke="#222" stroke-width="1.500"/>',
  target: '<circle cx="8" cy="8" r="6" stroke="#222"/><path d="M8 2v12M2 8h12" stroke="#222" stroke-width="1.500"/>',
  globe: '<circle cx="8" cy="8" r="6.500" fill="#3a78d0" stroke="#8ab4e8"/><path d="M5 4q5-1 5 3l-3 3" stroke="#e9f2ff" stroke-width="2"/>',

  line: '<path d="M2 14 14 2"/><path d="M1 13h2v2H1zM13 1h2v2h-2z" fill="#556"/>',
  xline: '<path d="M2 14 14 2"/><path d="M1 13h2v2H1zM13 1h2v2h-2zM7 7h2v2H7z" fill="#444"/>',
  pline: '<path d="M2 12h9q4-1 3-5t-8-2"/><path d="M1 11h2v2H1zM6 4h1v2H6z" fill="#444"/>',
  polygon: '<path d="m8 2 6.500 5-2.500 7H4L1.500 7z" fill="#eee"/>',
  rect: '<path d="M2 4h12v9H2z"/><path d="M1 12h2v2H1zM13 3h2v2h-2z" fill="#444"/>',
  arc: '<path d="M2 14Q2 5 13 3"/><path d="M1 13h2v2H1zM5 6h2v2H5zM12 2h2v2h-2z" fill="#444"/>',
  circle: '<circle cx="8" cy="8" r="6.500"/><path d="m8 8 4-3"/><circle cx="8" cy="8" r="1" fill="#444"/>',
  cloud: '<path d="M3 7q-3-5 2-6 3-1 4 1 5-2 5 2 0 3-1 4 3 4-1 6-4 1-5-1-4 2-6-1-1-3 2-5z" fill="#eee"/>',
  spline: '<path d="M1 13Q3 2 8 8t6-5"/>',
  ellipse: '<ellipse cx="8" cy="8" rx="6" ry="4"/><path d="M1 7h2v2H1zM13 7h2v2h-2zM7 3h2v2H7z" fill="#444"/>',
  earc: '<path d="M2 8q2-5 8-4 6 2 2 6-4 2-5 1"/><path d="M1 8h2v2H1z" fill="#444"/>',
  insert: '<path d="M6 2h8v8H9M2 8l6-3v8l-6 1zM9 10l4 4"/><path d="M13 13h2v2h-2z" fill="#222"/>',
  mkblock: '<path d="M2 4h9v7H2z"/><circle cx="11" cy="11" r="3" fill="#eee"/>',
  point: '<circle cx="8" cy="8" r="1" fill="#555"/>',
  hatch: '<path d="M3 3h10v10H3z" fill="#ccc"/><path d="M3 1v14M13 1v14M1 3h14M1 13h14"/>',
  gradient: '<path d="M3 3h10v10H3z" fill="#888"/><path d="m1 1 3 3M15 1l-3 3M1 15l3-3M15 15l-3-3"/>',
  region: '<path d="M1 3h8l6 5v6H1z" fill="#ddd"/><circle cx="7" cy="9" r="3" fill="#f5f5f5"/>',
  table: '<path d="M1 2h14v12H1zM1 8h14M1 11h14M6 5v9M11 5v9"/><path d="M1 2h14v3H1z" fill="#999"/>',
  mtext: '<path d="m3 14 4-12h2l4 12M5 10h6" stroke="#222" stroke-width="2"/>',
  addsel: '<circle cx="4" cy="4" r="2.500" fill="#4fa64a" stroke="#274"/><path d="m7 4 5 1v3" stroke="#333"/><circle cx="12" cy="12" r="2.500" fill="#cfe6fa" stroke="#27c"/>',
  bulbo: '<circle cx="6" cy="6" r="4.500" fill="#ffec98" stroke="#a83"/><path d="M4 11h4M4 14h4"/><circle cx="13" cy="4" r="2.500" fill="#e88a3c" stroke="none"/>',
  brusho: '<path d="m2 3 9 10" stroke-width="3"/><path d="m2 3 7 8" stroke="#eee"/><circle cx="12" cy="4" r="3" fill="#e88a3c" stroke="none"/><path d="m8 13 6-4" stroke="#a64"/>',
  doto: '<circle cx="4" cy="4" r="2.500" stroke="#e6a04c"/><circle cx="12" cy="4" r="3" fill="#e88a3c" stroke="none"/><path d="m6 9 4 5M9 11l5 3"/>',
  planegray: '<path d="M1 11 8 3q4 0 4 4" fill="#ddd"/><path d="M8 8h6v7H8zM8 11h6M11 8v7" fill="#ddd"/>',
  worldgreen: '<circle cx="8" cy="8" r="6.500" fill="#c3dccd"/><path d="M9 3q5 2 4 8l-3-2z" fill="#555"/>',
  sungray: '<circle cx="7" cy="7" r="3" fill="#fff0c8"/><path d="M7 0v3M0 7h3M2 2l2 2M12 2l-2 2M2 12l2-2"/>' + doc2,

  wheel: '<circle cx="8" cy="8" r="6.500"/><circle cx="8" cy="8" r="3"/>',
  dot: '<circle cx="8" cy="8" r="1" fill="currentColor"/>',
  navhand: '<path d="M5 14 2 9q-1-2 2 0V4q1-2 2 0V2q1-2 2 0v1q1-2 2 0v2q2-1 2 1v5l-2 3z"/>',
  navzoom: '<path d="m1 1 9 9M10 1 1 10"/><circle cx="11" cy="10" r="3"/><path d="m13 12 2 3"/>',
  orbit: '<ellipse cx="8" cy="8" rx="7" ry="3"/><path d="M8 1v14M6 3l2-2 2 2M6 13l2 2 2-2"/>',
  motion: '<path d="M1 1h4v4H1zM6 1h4v4H6zM11 1h4v4h-4zM1 7h9v8H1z"/><path d="m4 9 4 2-4 2z" fill="#222"/>',
  up: '<path d="m4 10 4-4 4 4" stroke-width="2"/>',
  left: '<path d="M10 5 7 8l3 3" stroke-width="1.500"/>',

  erase: '<path d="m3 12 8-9 4 3-8 8z" fill="#c89a68"/><path d="M1 14h9" stroke="#d87"/>',
  mcopy: '<circle cx="4" cy="4" r="3"/><circle cx="11" cy="11" r="3.500" stroke="#27c"/><circle cx="11" cy="4" r="2"/>',
  mirror: '<path d="M7 2v12H1zM10 2v12h5z" fill="#8bbadc" stroke="#357"/>',
  offset: '<path d="M1 12q0-5 4-5 1-5 6-5v11H1z" fill="#9cc8e8" stroke="#246"/>',
  array: '<path d="M1 1h5v5H1zM9 1h5v5H9zM1 9h5v5H1zM9 9h5v5H9z" stroke="#2b7fc0" stroke-width="1.500"/>',
  move: '<path d="M8 1v14M1 8h14M6 3l2-2 2 2M6 13l2 2 2-2M3 6 1 8l2 2" stroke="#333" stroke-width="1.500"/>',
  rotate: '<path d="M11 3a6 6 0 1 0 3 6M8 1l4 2-3 3"/>',
  scale: '<path d="M1 1h14v14" fill="#b5d8f2" stroke="#27a"/><path d="M1 8h7v7H1z" fill="#fff"/>',
  stretch: '<path d="M1 1h11v13H1z" fill="#fff"/><path d="M9 2h5v12" stroke="#5ab" stroke-width="2"/><path d="M5 11h6" stroke="#111" stroke-width="2"/>',
  trim: '<path d="M1 8h14" stroke="#27a"/><path d="m4 14 6-12"/>',
  extend: '<path d="M1 7h14" stroke="#27a"/><path d="M11 7v6"/>',
  breakpt: '<path d="M1 4h13v9H1z"/><path d="M9 3h3v3H9z" fill="#27c"/>',
  break: '<path d="M5 4H1v9h13V4"/><path d="M5 3h2v2H5zM10 3h2v2h-2z" fill="#27c"/>',
  join: '<path d="M1 8h14M5 5v6M10 5v6" stroke="#27a" stroke-width="2"/>',
  chamfer: '<path d="M1 14V8l6-6h8M1 14h14"/>',
  fillet: '<path d="M1 14V9q1-7 10-7h4M1 14h14" stroke="#27a"/>',
  blend: '<path d="M1 13q2-11 6-6t8 3" stroke="#27a"/><path d="M1 9v6" stroke="#333" stroke-width="2"/>',
  explode: '<path d="M2 7h9v7H2zM5 3h9v8" fill="#9fcbec" stroke="#257"/>',
  front: '<path d="M1 1h9v7H1zM4 4h9v7H4z" fill="#ddd"/><path d="M7 7h8v7H7z" fill="#bbb"/>',
  back: '<path d="M1 1h8v7H1z" fill="#fff"/><path d="M7 6h8v7H7z" fill="#bcd"/>',
  above: '<path d="M1 1h9v7H1z" fill="#fff"/><path d="M5 5h10v8H5z" fill="#bbb"/>',
  under: '<path d="M1 1h10v9H1z" fill="#fff"/><path d="M7 10h8v4H7z" fill="#ccd"/>',
  abc: '<path d="m1 6 2-4 2 4M6 2v4h3V2zM14 2h-3v4h3" stroke="#222"/><path d="M4 8v5h11"/>',
  hatchback: '<path d="M1 2h12v7H1z" fill="#aaa"/><path d="M7 9v5h8"/>',
  wrench: '<path d="m3 14 6-6q-1-5 4-5l-2 3 3 2q-1 4-4 2" fill="#ddd" stroke="none"/>',
  prompt: '<path d="M0 1h16v14H0z" fill="#dcdce6" stroke="#bbb"/><path d="m3 4 4 4-4 4M8 12h5" stroke="#555"/>',
  web: '<circle cx="8" cy="8" r="7" fill="#c9d4cf" stroke="#555"/><path d="M8 3q5 1 4 6M4 5l4 3-2 4" stroke="#687a70"/><circle cx="10" cy="9" r="3"/><path d="m12 11 3 3" stroke-width="2"/>',
  dist: '<path d="M1 4h14M1 1v6M15 1v6" stroke="#444"/><path d="M1 9h14v4H1z" fill="#f2a82c" stroke="#a86d10"/>',
  layerw: '<path d="m3 2 7-1-2 3-7 1zM1 8l7-1 2-3M1 12l7-1 2-3" fill="#eee" stroke="#ddd"/><path d="M9 6h6v9H9z" fill="#dde6fa" stroke="#3b5686"/>',
  listw: '<path d="M1 2h10l4 12H5L3 5H1z" fill="#e9e9e9" stroke="#ccc"/><path d="M5 5h5M6 8h6M7 11h6" stroke="#555"/>',
  layiso: '<path d="m5 2 8-1-3 3-8 1z" fill="#eee" stroke="#ccc"/><path d="m4 7 8-1-3 3-7 1zM3 12l6-1-1 3-6 0z" fill="#9ccbee" stroke="#79a"/><path d="m9 13 2 2 4-4" stroke="#111" stroke-width="2"/>',
  layfrz: '<path d="m5 2 7-1-3 4-7 1z" fill="#eee" stroke="#ccc"/><circle cx="11" cy="11" r="3.500" fill="#d8f0ff" stroke="#85c5ee" stroke-width="2"/><path d="m2 7 4 2" stroke="#9ccbee" stroke-width="2"/>',
  cog: '<circle cx="8" cy="8" r="4" fill="none" stroke="#888" stroke-width="3"/><circle cx="8" cy="8" r="6.500" stroke="#888" stroke-width="2" stroke-dasharray="2.500 2.600"/>',
  cmdline: '<path d="M0 1h16v9H0z" fill="#f2ea8a" stroke="#557"/><path d="M0 1h16" stroke="#44b" stroke-width="2"/><path d="M2 10h14v5H2z" fill="#112" stroke="#112"/>',

  snapx: '<path d="M8 2v12M2 8h12" stroke-width="2"/>', grids: '<path d="M12 3v10M3 13h10"/>', gridb: '<path d="M2 3h12v11H2zM6 3v11M10 3v11M2 7h12"/>',
  ortho: '<path d="M4 2v11h10"/>', polar: '<circle cx="7" cy="9" r="4"/><path d="M6 11 14 2"/>', osnap: '<path d="M3 4h10v10H3z" fill="#fff"/>',
  box3: '<path d="M4 3h9v11H4z" fill="#fff"/>', otrack: '<path d="m3 13 9-10"/>', ducs: '<path d="M3 3v11h11" stroke="#2a8a8a"/><path d="m7 9 5-6" stroke="#da3"/>',
  dyn: '<path d="M8 3v11M3 9h10" stroke-width="2"/>', lwt: '<path d="M8 3v11M3 9h11" stroke-width="3"/>', tpy: '<path d="M3 3h10v10H3z" fill="#9cc8ec"/>',
  qp: '<path d="M4 4h8v10H4z"/>', sc: '<path d="m3 3 3 3M5 6h9v8H5z" stroke="#376"/>', plusb: '<path d="M6 2h4v4h4v4h-4v4H6v-4H2V6h4z" fill="#ddd"/>'
};

function svg(name) {
  return '<svg viewBox="0 0 16 16" aria-hidden="true">' + icons[name] + '</svg>';
}

// single icons
document.querySelectorAll('[data-icon]').forEach(function (elem) {
  elem.innerHTML = svg(elem.dataset.icon);
});

// rows of tool buttons, "|" is a separator
document.querySelectorAll('[data-icons]').forEach(function (bar) {
  bar.dataset.icons.split(' ').forEach(function (name) {
    const item = document.createElement(name === '|' ? 'span' : 'button');
    if (name === '|') {
      item.className = 'sep';
    } else {
      item.className = 'tool';
      item.setAttribute('aria-label', name);
      item.innerHTML = svg(name);
    }
    bar.append(item);
  });
});
```
